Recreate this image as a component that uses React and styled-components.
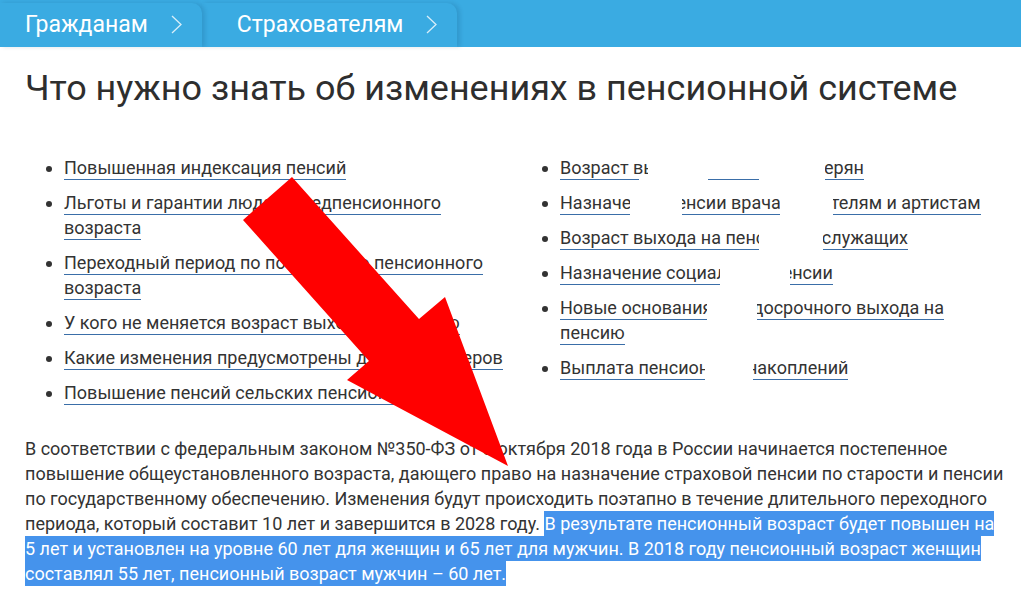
import React from "react";
import styled, { createGlobalStyle } from "styled-components";

const GlobalStyle = createGlobalStyle`
  html, body {
    margin: 0;
    padding: 0;
    background: #fff;
    overflow: hidden;
  }
  body {
    font-family: Roboto, "Noto Sans", "Liberation Sans", sans-serif;
    color: #333;
  }
`;

const Page = styled.div`
  position: relative;
  width: 1021px;
  height: 612px;
  overflow: hidden;
`;

const NavBar = styled.nav`
  display: flex;
  align-items: flex-end;
  height: 47px;
  background: #3aabe2;
`;

const Tab = styled.a`
  display: flex;
  align-items: center;
  gap: 23px;
  height: 44px;
  padding: 0 20px 2px ${(p) => (p.$first ? 25 : 35)}px;
  border-top-right-radius: 10px;
  background: #3aabe2;
  box-shadow: 3px 0 4px rgba(0, 40, 80, 0.14);
  color: #fff;
  font-size: 23px;
  line-height: 1;
  box-sizing: border-box;
  position: relative;
  z-index: ${(p) => p.$z};
`;

const Chevron = () => (
  <svg width="11" height="19" viewBox="0 0 11 19" fill="none">
    <path d="M1 1l9 8.5L1 18" stroke="rgba(255,255,255,0.8)" strokeWidth="1.3" />
  </svg>
);

const Content = styled.main`
  padding: 0 14px 0 25px;
`;

const Title = styled.h1`
  margin: 20px 0 0;
  font-size: 35.95px;
  font-weight: 400;
  line-height: 42px;
  color: #2e2e2e;
`;

const Columns = styled.div`
  display: grid;
  grid-template-columns: 496px 1fr;
  margin-top: 46px;
`;

const List = styled.ul`
  margin: 0;
  padding-left: 39px;
  list-style: disc;
`;

const Item = styled.li`
  position: relative;
  font-size: 18px;
  line-height: 25px;
  margin-bottom: 10px;
  &:last-child {
    margin-bottom: 0;
  }
`;

const Link = styled.a`
  color: #333;
  border-bottom: 1px solid #3a6ea8;
  padding-bottom: 1px;
`;

const Patch = styled.span`
  position: absolute;
  top: ${(p) => p.$top || 0}px;
  left: ${(p) => p.$x}px;
  width: ${(p) => p.$w}px;
  height: ${(p) => p.$h || 27}px;
  background: #fff;
`;

const Text = styled.p`
  margin: 31px 0 0;
  font-size: 18px;
  line-height: 25px;
  color: #333;
`;

const Selected = styled.span`
  background: #4593ec;
  color: #fff;
  padding: 2px 0;
`;

const Arrow = styled.svg`
  position: absolute;
  top: 0;
  left: 0;
  pointer-events: none;
`;

const leftItems = [
  "Повышенная индексация пенсий",
  "Льготы и гарантии людям предпенсионного возраста",
  "Переходный период по повышению пенсионного возраста",
  "У кого не меняется возраст выхода на пенсию",
  "Какие изменения предусмотрены для пенсионеров",
  "Повышение пенсий сельских пенсионеров",
];

const rightItems = [
  {
    text: "Возраст выхода на пенсию северян",
    patches: [
      { x: 79, w: 9, top: 22, h: 5 },
      { x: 88, w: 60 },
      { x: 148, w: 51, h: 22 },
      { x: 199, w: 66 },
    ],
  },
  {
    text: "Назначение пенсии врачам, учителям и артистам",
    patches: [
      { x: 70, w: 52 },
      { x: 220, w: 53 },
    ],
  },
  {
    text: "Возраст выхода на пенсию госслужащих",
    patches: [{ x: 199, w: 64 }],
  },
  {
    text: "Назначение социальной пенсии",
    patches: [{ x: 160, w: 70 }],
  },
  {
    text: "Новые основания для досрочного выхода на пенсию",
    patches: [{ x: 147, w: 50 }],
  },
  {
    text: "Выплата пенсионных накоплений",
    patches: [{ x: 145, w: 48 }],
  },
];

export default function App() {
  return (
    <Page>
      <GlobalStyle />
      <NavBar>
        <Tab $first $z={2}>
          Гражданам
          <Chevron />
        </Tab>
        <Tab $z={1}>
          Страхователям
          <Chevron />
        </Tab>
      </NavBar>
      <Content>
        <Title>Что нужно знать об изменениях в пенсионной системе</Title>
        <Columns>
          <List>
            {leftItems.map((t) => (
              <Item key={t}>
                <Link>{t}</Link>
              </Item>
            ))}
          </List>
          <List>
            {rightItems.map((it) => (
              <Item key={it.text}>
                <Link>{it.text}</Link>
                {it.patches.map((p, i) => (
                  <Patch key={i} $x={p.x} $w={p.w} $h={p.h} $top={p.top} />
                ))}
              </Item>
            ))}
          </List>
        </Columns>
        <Text>
          В соответствии с федеральным законом №350-ФЗ от 3 октября 2018 года в
          России начинается постепенное повышение общеустановленного возраста,
          дающего право на назначение страховой пенсии по старости и пенсии по
          государственному обеспечению. Изменения будут происходить поэтапно в
          течение длительного переходного периода, который составит 10 лет и
          завершится в 2028 году.{" "}
          <Selected>
            В результате пенсионный возраст будет повышен на 5 лет и установлен
            на уровне 60 лет для женщин и 65 лет для мужчин. В 2018 году
            пенсионный возраст женщин составлял 55 лет, пенсионный возраст
            мужчин – 60 лет.
          </Selected>
        </Text>
      </Content>
      <Arrow width="1021" height="612" viewBox="0 0 1021 612">
        <polygon
          points="292,177 419,319 445,297 508,466 347,380 369,361 243,220"
          fill="#ff0000"
        />
      </Arrow>
    </Page>
  );
}
